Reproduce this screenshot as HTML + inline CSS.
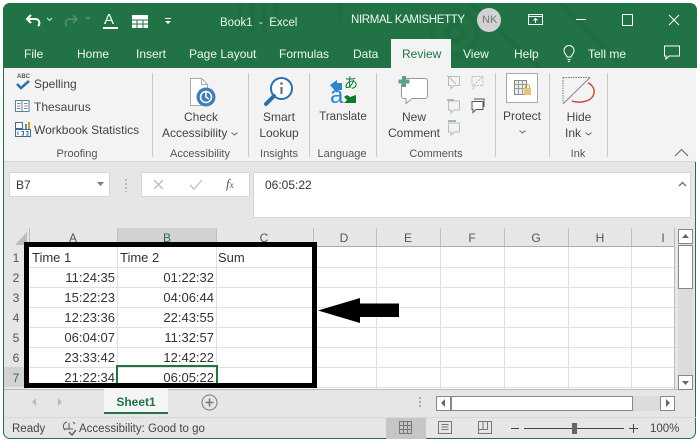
<!DOCTYPE html>
<html><head><meta charset="utf-8"><style>
html,body{margin:0;padding:0;background:#fff}
#w{position:relative;width:700px;height:448px;overflow:hidden;background:#fff;font-family:"Liberation Sans",sans-serif;color:#444}
#w div,#w svg{position:absolute}
.t{white-space:nowrap;font-size:12px;line-height:14px}
.c{text-align:center;transform:translateX(-50%)}
.w{color:#f1f7f3}
.g{color:#555;font-size:11px}
.sep{width:1px;background:#c8c8c8;top:73px;height:84px}
.cell{font-size:13px;color:#333;white-space:nowrap;line-height:14px}
.r{text-align:right;width:80px}
.hl{left:29px;width:645px;height:1px;background:#e0e0e0}
.vl{top:247px;width:1px;height:142px;background:#e0e0e0}
.ch{top:231px;font-size:12px;color:#555;transform:translateX(-50%);line-height:14px}
.rh{left:11px;width:10px;text-align:center;font-size:12px;color:#555;line-height:14px}
.hs{top:228px;width:1px;height:19px;background:#bdbdbd}
</style></head><body><div id="w">
<div style="left:3px;top:3px;width:693px;height:436px;background:#e6e6e6;border-radius:7px;border:1px solid #217346;box-sizing:border-box"></div>
<div style="left:3px;top:3px;width:694px;height:65px;background:#217346;border-radius:7px 7px 0 0"></div>
<svg style="left:230px;top:3px" width="400" height="65" fill="none" stroke="#1f6e43" stroke-width="5"><circle cx="225" cy="30" r="22"/><circle cx="225" cy="30" r="8"/><path d="M10 0v30M22 0v30M34 0v30M46 0v25M240 0l70 65M330 0l60 60M110 0v20"/></svg>
<!-- title -->
<svg style="left:25px;top:13px" width="20" height="16" fill="none" stroke="#fff" stroke-width="2"><path d="M6 2L2 6l4 4M2 6h8a4 4 0 0 1 3 7"/></svg>
<svg style="left:46px;top:17px" width="8" height="6" fill="none" stroke="#d5e6dc"><path d="M1 1l2.500 2.500L6 1"/></svg>
<svg style="left:64px;top:13px" width="28" height="16" fill="none" stroke="#4e8f6c" stroke-width="1.700"><path d="M9 2l4 4-4 4M13 6H6a4 4 0 0 0-3 7M22 4l2 2 2-2"/></svg>
<div class="t" style="left:104px;top:12px;font-size:15px;color:#fff;line-height:15px">A</div>
<div style="left:103px;top:27px;width:15px;height:2px;background:#fff"></div>
<svg style="left:132px;top:15px" width="16" height="13"><rect width="16" height="13" fill="#fff"/><path d="M0 5h16M0 9h16M5 5v8M11 5v8" stroke="#217346"/></svg>
<svg style="left:164px;top:18px" width="8" height="8" fill="#fff"><rect x="1" y="0" width="6" height="1"/><path d="M1 3h6L4 6z"/></svg>
<div class="t w" style="left:220px;top:16px;font-size:11.500px">Book1&nbsp; -&nbsp; Excel</div>
<div class="t w" style="left:351px;top:13px;font-size:11.500px;letter-spacing:-.35px">NIRMAL KAMISHETTY</div>
<div style="left:477px;top:8px;width:24px;height:24px;border-radius:50%;background:#d2d2d2"></div>
<div class="t" style="left:482px;top:13px;font-size:11px;color:#777">NK</div>
<svg style="left:528px;top:13px" width="16" height="13" fill="none" stroke="#fff"><rect x=".5" y="1.500" width="14" height="10"/><path d="M.5 3.500h14M7.500 10V5.500M5.500 7.500l2-2 2 2"/></svg>
<div style="left:576px;top:19px;width:10px;height:1px;background:#fff"></div>
<div style="left:622px;top:14px;width:9px;height:10px;border:1px solid #fff"></div>
<svg style="left:668px;top:14px" width="12" height="12" stroke="#fff"><path d="M1 1l10 10M11 1L1 11"/></svg>
<!-- tabs -->
<div class="t w" style="left:24px;top:47px">File</div>
<div class="t w" style="left:77px;top:47px">Home</div>
<div class="t w" style="left:136px;top:47px">Insert</div>
<div class="t w" style="left:189px;top:47px">Page Layout</div>
<div class="t w" style="left:279px;top:47px">Formulas</div>
<div class="t w" style="left:353px;top:47px">Data</div>
<div style="left:391px;top:39px;width:60px;height:30px;background:#f3f3f3"></div>
<div class="t" style="left:402px;top:47px;color:#217346">Review</div>
<div class="t w" style="left:463px;top:47px">View</div>
<div class="t w" style="left:514px;top:47px">Help</div>
<svg style="left:562px;top:45px" width="15" height="18" fill="none" stroke="#fff"><path d="M5 12c0-2-3-3-3-6.500a5 5 0 0 1 10 0C12 9 9 10 9 12zM5.500 14.500h3M6 16.500h2"/></svg>
<div class="t w" style="left:588px;top:47px">Tell me</div>
<svg style="left:664px;top:45px" width="18" height="17" fill="none" stroke="#fff"><path d="M.5 1h15v10H5l-3 3v-3H.5z"/></svg>
<!-- ribbon -->
<div style="left:4px;top:68px;width:692px;height:93px;background:#f3f3f3;border-bottom:1px solid #d4d4d4"></div>
<div class="sep" style="left:152px"></div><div class="sep" style="left:248px"></div><div class="sep" style="left:309px"></div><div class="sep" style="left:376px"></div><div class="sep" style="left:495px"></div><div class="sep" style="left:549px"></div><div class="sep" style="left:607px"></div>
<div class="t" style="left:17px;top:74px;font-size:6px;line-height:7px;color:#555;font-weight:bold">ABC</div>
<svg style="left:16px;top:80px" width="14" height="11" fill="none" stroke="#2c6fb0" stroke-width="2.500"><path d="M1 4l4 4 8-7"/></svg>
<div class="t" style="left:34px;top:77px">Spelling</div>
<svg style="left:15px;top:100px" width="15" height="12" fill="#fff" stroke="#5a7f9f"><rect x=".5" y=".5" width="6.500" height="11"/><rect x="7" y=".5" width="7" height="11"/><path d="M2 3.500h3.500M2 6h3.500M2 8.500h3.500M9 3.500h3.500M9 6h3.500M9 8.500h3.500" stroke="#888"/></svg>
<div class="t" style="left:34px;top:100px">Thesaurus</div>
<svg style="left:15px;top:121px" width="16" height="16"><rect x=".5" y="1.500" width="7" height="6" fill="#fff" stroke="#3c6e9c"/><rect x="10" y="3" width="2" height="5" fill="#888"/><rect x="13" y="1" width="2" height="7" fill="#d39b3a"/><rect x=".5" y="8.500" width="15" height="7" fill="#fff" stroke="#3c6e9c"/><path d="M3 10.500v3.500M6.500 10.500h2v3.500h-2M11 10.500h2v3.500h-2" stroke="#3c6e9c" fill="none"/></svg>
<div class="t" style="left:34px;top:123px">Workbook Statistics</div>
<div class="t c g" style="left:77px;top:147px">Proofing</div>
<svg style="left:188px;top:77px" width="32" height="32"><path d="M2.500 1.500h11l6 6v21h-17z" fill="#fff" stroke="#aaa"/><path d="M13.500 1.500v6h6" fill="none" stroke="#aaa"/><circle cx="18" cy="20" r="9.500" fill="#3f7fb8"/><circle cx="18" cy="20" r="5.500" fill="none" stroke="#fff" stroke-width="1.500"/><path d="M18 15v5l3 2" stroke="#fff" fill="none" stroke-width="1.500"/></svg>
<div class="t c" style="left:201px;top:110px">Check</div>
<div class="t" style="left:162px;top:126px">Accessibility</div>
<svg style="left:231px;top:132px" width="7" height="4" fill="none" stroke="#666"><path d="M.5.500l3 2.500 3-2.500"/></svg>
<div class="t c g" style="left:200px;top:147px">Accessibility</div>
<svg style="left:264px;top:75px" width="32" height="34" fill="none"><circle cx="17.500" cy="13.500" r="10.500" fill="#fff" stroke="#2d6fa8" stroke-width="2"/><path d="M10 21L2 29" stroke="#2d6fa8" stroke-width="4" stroke-linecap="round"/><path d="M17.500 12v7" stroke="#666" stroke-width="2"/><circle cx="17.500" cy="8.500" r="1.300" fill="#666"/></svg>
<div class="t c" style="left:279px;top:110px">Smart</div>
<div class="t c" style="left:279px;top:126px">Lookup</div>
<div class="t c g" style="left:279px;top:147px">Insights</div>
<!-- translate -->
<svg style="left:328px;top:78px" width="30" height="28"><path d="M2 7L9 2v3h5v7H9v3z" fill="#2c86cc"/><path d="M28 17v8H16l3-3-3-3 3-2 3 2z" fill="#0d7a2e"/></svg>
<div class="t" style="left:344px;top:76px;font-size:14px;color:#0d7a2e;font-family:'Liberation Sans','Noto Sans CJK JP',sans-serif">あ</div>
<div class="t" style="left:330px;top:84px;font-size:24px;line-height:24px;color:#2c86cc">a</div>
<div class="t c" style="left:343px;top:110px;font-size:11.500px">Translate</div>
<div class="t c g" style="left:342px;top:147px">Language</div>
<svg style="left:396px;top:76px" width="34" height="30" fill="none"><path d="M6 2.500h23a2.500 2.500 0 0 1 2.500 2.500v15a2.500 2.500 0 0 1-2.500 2.500H16l-6 5v-5H8a2.500 2.500 0 0 1-2.500-2.500V8" fill="#fff" stroke="#999"/><path d="M8 0v11M2.500 5.500h11" stroke="#5fa08a" stroke-width="4"/></svg>
<div class="t c" style="left:414px;top:110px">New</div>
<div class="t c" style="left:414px;top:126px">Comment</div>
<svg style="left:446px;top:74px" width="40" height="62" fill="none" stroke="#bbb">
<path d="M2.500 2.500h11v9H8l-3 3v-3H2.500zM1 1l9 9"/>
<path d="M26 2.500h11v9h-7l-3 3v-3h-1zM28 11l8-8" stroke-dasharray="2 1"/>
<path d="M2.500 27h11v9H8l-3 3v-3H2.500z"/><path d="M1 26h7" stroke="#9bb" stroke-width="2"/>
<path d="M26 27.500h10a1 1 0 0 1 1 1v7h-7l-3 3v-3h-1z" fill="#fff" stroke="#555"/><path d="M28 25h10v8" stroke="#555"/>
<path d="M2.500 49h11v9H8l-3 3v-3H2.500z"/><path d="M2 47h8" stroke="#9bb" stroke-width="2"/>
</svg>
<div class="t c g" style="left:436px;top:147px">Comments</div>
<div style="left:506px;top:73px;width:32px;height:30px;background:#fff;border:1px solid #aaa;box-sizing:border-box"></div>
<svg style="left:514px;top:80px" width="18" height="16"><rect x=".5" y=".5" width="12" height="14" fill="#eee" stroke="#888"/><path d="M.5 4.500h12M.5 8.500h12M4.500.5v14M8.500.5v14" stroke="#999"/><rect x="10" y="8" width="7" height="7" fill="#e3c27a"/><path d="M11.500 8V6.500a2 2 0 0 1 4 0V8" fill="none" stroke="#c9a65a"/></svg>
<div class="t c" style="left:522px;top:109px">Protect</div>
<svg style="left:519px;top:130px" width="7" height="4" fill="none" stroke="#666"><path d="M.5.500l3 2.500 3-2.500"/></svg>
<svg style="left:562px;top:76px" width="34" height="30" fill="none"><path d="M1 1.500h27M1 1.500V27" stroke="#777" stroke-dasharray="1.500 1"/><path d="M1 28L28 1.500" stroke="#888"/><path d="M10 25C16 27 30 27 32 17 33 12 29 8 26 7" stroke="#c9503c" stroke-width="1.500"/></svg>
<div class="t c" style="left:579px;top:110px">Hide</div>
<div class="t" style="left:565px;top:126px">Ink</div>
<svg style="left:585px;top:132px" width="7" height="4" fill="none" stroke="#666"><path d="M.5.500l3 2.500 3-2.500"/></svg>
<div class="t c g" style="left:578px;top:147px">Ink</div>
<svg style="left:674px;top:148px" width="15" height="9" fill="none" stroke="#666"><path d="M1 8l6.500-6.500L14 8"/></svg>
<!-- formula bar -->
<div style="left:9px;top:172px;width:101px;height:25px;background:#fff;border:1px solid #d6d6d6;box-sizing:border-box"></div>
<div class="t" style="left:16px;top:178px;color:#333">B7</div>
<svg style="left:97px;top:182px" width="8" height="5"><path d="M0 0h7L3.500 4z" fill="#777"/></svg>
<div style="left:125px;top:179px;width:2px;height:13px;background:repeating-linear-gradient(#bbb 0 2px,transparent 2px 4px)"></div>
<div style="left:141px;top:172px;width:109px;height:25px;background:#fff;border:1px solid #d6d6d6;box-sizing:border-box"></div>
<svg style="left:153px;top:179px" width="54" height="12" fill="none" stroke="#bdbdbd" stroke-width="1.300"><path d="M1 1l9 9M10 1l-9 9M37 6l4 4 8-9"/></svg>
<div class="t" style="left:226px;top:177px;font-family:'Liberation Serif',serif;font-style:italic;font-size:13px;color:#555">f<span style="font-size:9px">x</span></div>
<div style="left:253px;top:172px;width:438px;height:46px;background:#fff;border:1px solid #d6d6d6;box-sizing:border-box"></div>
<div class="t" style="left:265px;top:178px;color:#333">06:05:22</div>
<svg style="left:678px;top:181px" width="9" height="6" fill="none" stroke="#777" stroke-width="1.500"><path d="M1 5l3.500-3.500L8 5"/></svg>
<!-- grid -->
<div style="left:4px;top:228px;width:670px;height:19px;background:#e6e6e6"></div>
<div style="left:117px;top:228px;width:99px;height:19px;background:#d2d2d2"></div>
<svg style="left:14px;top:231px" width="14" height="15"><path d="M13 1v13H1z" fill="#bdbdbd"/></svg>
<div style="left:29px;top:247px;width:645px;height:142px;background:#fff"></div>
<div style="left:4px;top:367px;width:25px;height:20px;background:#d2d2d2"></div>
<div class="hs" style="left:29px"></div><div class="hs" style="left:117px"></div><div class="hs" style="left:216px"></div><div class="hs" style="left:313px"></div><div class="hs" style="left:376px"></div><div class="hs" style="left:440px"></div><div class="hs" style="left:504px"></div><div class="hs" style="left:568px"></div><div class="hs" style="left:631px"></div>
<div style="left:29px;top:246px;width:645px;height:1px;background:#aaa"></div>
<div class="hl" style="top:267px"></div><div class="hl" style="top:287px"></div><div class="hl" style="top:307px"></div><div class="hl" style="top:327px"></div><div class="hl" style="top:347px"></div><div class="hl" style="top:367px"></div><div class="hl" style="top:387px"></div>
<div class="vl" style="left:117px"></div><div class="vl" style="left:216px"></div><div class="vl" style="left:313px"></div><div class="vl" style="left:376px"></div><div class="vl" style="left:440px"></div><div class="vl" style="left:504px"></div><div class="vl" style="left:568px"></div><div class="vl" style="left:631px"></div>
<div style="left:674px;top:228px;width:1px;height:161px;background:#bbb"></div>
<div class="ch" style="left:73px">A</div><div class="ch" style="left:167px;color:#217346">B</div><div class="ch" style="left:264px">C</div><div class="ch" style="left:344px">D</div><div class="ch" style="left:408px">E</div><div class="ch" style="left:472px">F</div><div class="ch" style="left:536px">G</div><div class="ch" style="left:600px">H</div><div class="ch" style="left:663px">I</div>
<div class="rh" style="top:251px">1</div><div class="rh" style="top:271px">2</div><div class="rh" style="top:291px">3</div><div class="rh" style="top:311px">4</div><div class="rh" style="top:331px">5</div><div class="rh" style="top:351px">6</div><div class="rh" style="top:371px;color:#217346">7</div>
<div class="cell" style="left:32px;top:251px">Time 1</div><div class="cell" style="left:120px;top:251px">Time 2</div><div class="cell" style="left:218px;top:251px">Sum</div>
<div class="cell r" style="left:35px;top:271px">11:24:35</div><div class="cell r" style="left:134px;top:271px">01:22:32</div>
<div class="cell r" style="left:35px;top:291px">15:22:23</div><div class="cell r" style="left:134px;top:291px">04:06:44</div>
<div class="cell r" style="left:35px;top:311px">12:23:36</div><div class="cell r" style="left:134px;top:311px">22:43:55</div>
<div class="cell r" style="left:35px;top:331px">06:04:07</div><div class="cell r" style="left:134px;top:331px">11:32:57</div>
<div class="cell r" style="left:35px;top:351px">23:33:42</div><div class="cell r" style="left:134px;top:351px">12:42:22</div>
<div class="cell r" style="left:35px;top:371px">21:22:34</div><div class="cell r" style="left:134px;top:371px">06:05:22</div>
<div style="left:116px;top:365px;width:102px;height:23px;border:2px solid #217346;box-sizing:border-box"></div>
<div style="left:24px;top:242px;width:293px;height:146px;border:5px solid #000;box-sizing:border-box"></div>
<svg style="left:318px;top:296px" width="82" height="28"><path d="M0 14.500L42 2v5.500h39v13.500H42v6z" fill="#000"/></svg>
<!-- v scrollbar -->
<div style="left:678px;top:229px;width:15px;height:161px;background:#dcdcdc"></div>
<div style="left:678px;top:229px;width:15px;height:15px;background:#fff;border:1px solid #888;box-sizing:border-box"></div>
<svg style="left:682px;top:234px" width="8" height="5"><path d="M0 4h7L3.500 0z" fill="#666"/></svg>
<div style="left:678px;top:245px;width:15px;height:44px;background:#fff;border:1px solid #888;box-sizing:border-box"></div>
<div style="left:678px;top:375px;width:15px;height:15px;background:#fff;border:1px solid #888;box-sizing:border-box"></div>
<svg style="left:682px;top:381px" width="8" height="5"><path d="M0 0h7L3.500 4z" fill="#666"/></svg>
<!-- sheet tabs -->
<div style="left:4px;top:389px;width:674px;height:1px;background:#bbb"></div>
<div style="left:104px;top:389px;width:64px;height:25px;background:#f5f5f5;border-bottom:2px solid #217346;box-sizing:border-box"></div>
<div class="t c" style="left:136px;top:395px;font-weight:bold;color:#217346">Sheet1</div>
<svg style="left:30px;top:398px" width="34" height="9" fill="#bbb"><path d="M6 0v8L2 4zM28 0v8l4-4z"/></svg>
<svg style="left:201px;top:394px" width="17" height="17" fill="none" stroke="#777"><circle cx="8.500" cy="8.500" r="7.500"/><path d="M4.500 8.500h8M8.500 4.500v8" stroke-width="1.500"/></svg>
<div style="left:419px;top:397px;width:2px;height:12px;background:repeating-linear-gradient(#aaa 0 2px,transparent 2px 4px)"></div>
<div style="left:436px;top:396px;width:239px;height:15px;background:#dcdcdc"></div>
<div style="left:436px;top:396px;width:15px;height:15px;background:#fff;border:1px solid #888;box-sizing:border-box"></div>
<svg style="left:441px;top:399px" width="5" height="9"><path d="M4 0v8L0 4z" fill="#666"/></svg>
<div style="left:451px;top:396px;width:182px;height:15px;background:#fff;border:1px solid #888;box-sizing:border-box"></div>
<div style="left:660px;top:396px;width:15px;height:15px;background:#fff;border:1px solid #888;box-sizing:border-box"></div>
<svg style="left:666px;top:399px" width="5" height="9"><path d="M0 0v8l4-4z" fill="#666"/></svg>
<!-- status -->
<div style="left:4px;top:417px;width:692px;height:1px;background:#d8d8d8"></div>
<div class="t" style="left:12px;top:422px;color:#444;font-size:11.500px">Ready</div>
<svg style="left:60px;top:420px" width="19" height="17" fill="none" stroke="#555"><path d="M5 10a5 5 0 0 1-1-6 5 5 0 0 1 3-2M4 9h9M9 3v6M13 2l2 2"/><path d="M9 12l3 3 4-5" stroke-width="1.400"/></svg>
<div class="t" style="left:79px;top:422px;font-size:11.500px">Accessibility: Good to go</div>
<div style="left:386px;top:418px;width:40px;height:21px;background:#c6c6c6"></div>
<svg style="left:399px;top:421px" width="14" height="14" fill="none" stroke="#777"><path d="M.5.500h12v12H.5zM.5 4.500h12M.5 8.500h12M4.500.5v12M8.500.5v12"/></svg>
<svg style="left:438px;top:421px" width="16" height="14" fill="none" stroke="#777"><rect x=".5" y=".5" width="13" height="12"/><path d="M3.500 3.500h7M3.500 6h7M3.500 8.500h7"/></svg>
<svg style="left:478px;top:421px" width="16" height="14" fill="none" stroke="#777"><path d="M.5.500h13v12H.5zM.5 8.500h9M5 .5v8M9.500.5v8"/></svg>
<div style="left:511px;top:428px;width:8px;height:1px;background:#444"></div>
<div style="left:524px;top:428px;width:100px;height:1px;background:#444"></div>
<div style="left:572px;top:423px;width:5px;height:11px;background:#666"></div>
<div style="left:629px;top:428px;width:9px;height:1px;background:#444"></div>
<div style="left:633px;top:424px;width:1px;height:9px;background:#444"></div>
<div class="t" style="left:650px;top:422px;font-size:11.500px">100%</div>
</div></body></html>
